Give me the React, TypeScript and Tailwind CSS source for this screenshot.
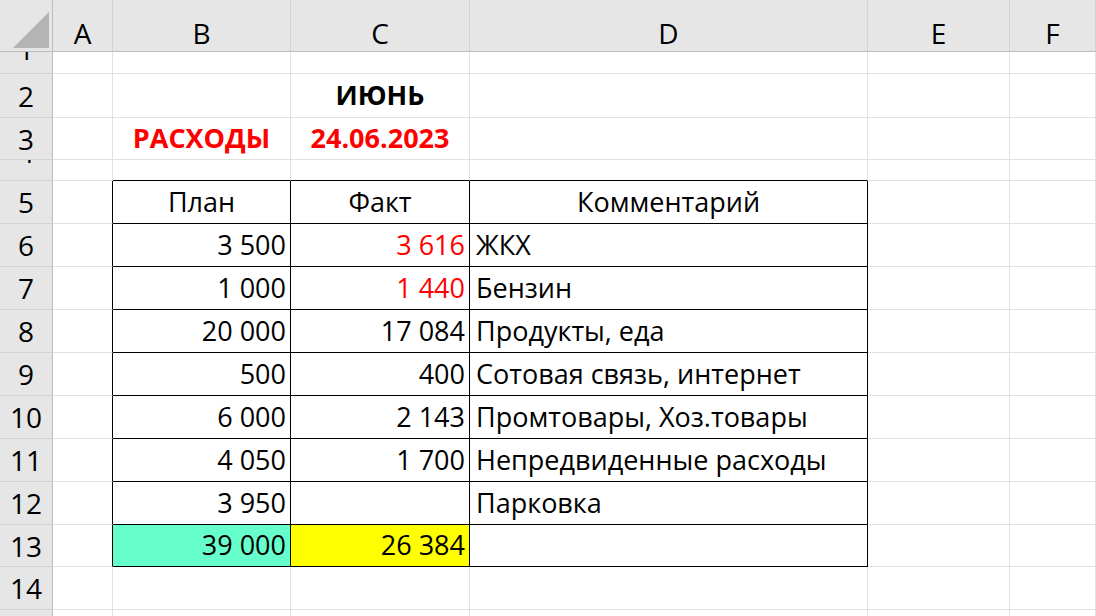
import React from "react";

const cols = [53, 60, 178, 179, 398, 142, 86];
const rows = [52, 22, 44, 42, 21, 43, 43, 43, 43, 43, 43, 43, 43, 42, 43, 20];
const letters = ["A", "B", "C", "D", "E", "F"];

type C = { t?: string; a?: "l" | "r" | "c"; red?: boolean; bold?: boolean; bg?: string };
const data: Record<string, C> = {
  "2-3": { t: "ИЮНЬ", a: "c", bold: true },
  "3-2": { t: "РАСХОДЫ", a: "c", bold: true, red: true },
  "3-3": { t: "24.06.2023", a: "c", bold: true, red: true },
  "5-2": { t: "План", a: "c" },
  "5-3": { t: "Факт", a: "c" },
  "5-4": { t: "Комментарий", a: "c" },
};
const tbl: [string, string, boolean, string][] = [
  ["3 500", "3 616", true, "ЖКХ"],
  ["1 000", "1 440", true, "Бензин"],
  ["20 000", "17 084", false, "Продукты, еда"],
  ["500", "400", false, "Сотовая связь, интернет"],
  ["6 000", "2 143", false, "Промтовары, Хоз.товары"],
  ["4 050", "1 700", false, "Непредвиденные расходы"],
  ["3 950", "", false, "Парковка"],
];
tbl.forEach((r, i) => {
  const n = 6 + i;
  data[`${n}-2`] = { t: r[0], a: "r" };
  data[`${n}-3`] = { t: r[1], a: "r", red: r[2] };
  data[`${n}-4`] = { t: r[3], a: "l" };
});
data["13-2"] = { t: "39 000", a: "r", bg: "bg-[#66ffcc]" };
data["13-3"] = { t: "26 384", a: "r", bg: "bg-[#ffff00]" };

export default function App() {
  const cells: React.ReactNode[] = [];
  rows.forEach((_, r) => {
    cols.forEach((__, c) => {
      const key = `${r}-${c}`;
      if (r === 0 && c === 0) {
        cells.push(
          <div key={key} className="bg-[#e6e6e6] border-r border-b border-[#bdbdbd] relative">
            <div className="absolute right-[3px] bottom-[3px] w-0 h-0 border-l-[36px] border-l-transparent border-b-[36px] border-b-[#b4b4b4]" />
          </div>
        );
        return;
      }
      if (r === 0) {
        cells.push(
          <div key={key} className="bg-[#e6e6e6] border-r border-b border-[#bdbdbd] border-r-[#d4d4d4] flex items-center justify-center text-[28px] pt-[14px] text-black">
            {letters[c - 1]}
          </div>
        );
        return;
      }
      if (c === 0) {
        const shift = r === 1 ? "translate-y-[-14px]" : r === 4 ? "translate-y-[-18px]" : r === 15 ? "translate-y-[6px]" : "";
        cells.push(
          <div key={key} className="bg-[#e6e6e6] border-r border-b border-[#bdbdbd] border-b-[#d4d4d4] flex items-center justify-center overflow-hidden text-[28px] leading-[32px]">
            <span className={shift}>{r}</span>
          </div>
        );
        return;
      }
      const d = data[`${r}-${c}`] || {};
      const inTable = r >= 5 && r <= 13 && c >= 2 && c <= 4;
      let br = "border-r-[#e1e1e1]";
      let bb = "border-b-[#e1e1e1]";
      if (inTable) { br = "border-r-black"; bb = "border-b-black"; }
      if (c === 1 && r >= 5 && r <= 13) br = "border-r-black";
      if (r === 4 && c >= 2 && c <= 4) bb = "border-b-black";
      const just = d.a === "r" ? "justify-end pr-[4px]" : d.a === "l" ? "justify-start pl-[6px]" : "justify-center";
      cells.push(
        <div
          key={key}
          className={`border-r border-b ${br} ${bb} ${d.bg || "bg-white"} flex items-center ${just} text-[27px] whitespace-nowrap ${d.red ? "text-[#ff0000]" : "text-black"} ${d.bold ? "font-bold" : ""}`}
        >
          {d.t}
        </div>
      );
    });
  });
  return (
    <div
      className="w-[1096px] h-[616px] overflow-hidden bg-white grid"
      style={{
        fontFamily: '"Open Sans", "Noto Sans", sans-serif',
        gridTemplateColumns: cols.map((x) => x + "px").join(" "),
        gridTemplateRows: rows.map((x) => x + "px").join(" "),
      }}
    >
      {cells}
    </div>
  );
}
